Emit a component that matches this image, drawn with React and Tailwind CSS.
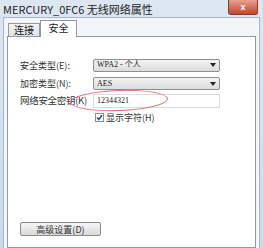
import React from 'react';

const font = { fontFamily: '"Noto Sans CJK SC", "Liberation Sans", sans-serif' };

const Select = ({ value }) => (
  <div className="flex items-center justify-between h-[13px] w-[127px] border border-[#8e8f8f] rounded-[2px] bg-gradient-to-b from-[#f4f4f4] to-[#dcdcdc] px-[3px]">
    <span className="text-[8px] leading-none text-[#222]" style={{ fontFamily: '"Liberation Serif", "Noto Sans CJK SC", serif' }}>{value}</span>
    <svg width="6" height="4" viewBox="0 0 6 4"><path d="M0 0h6L3 4z" fill="#222" /></svg>
  </div>
);

export default function App() {
  return (
    <div className="w-[263px] h-[248px] overflow-hidden flex flex-col bg-gradient-to-b from-[#dde7f2] to-[#c9d9ec]" style={font}>
      <div className="h-[17px] flex items-start justify-between pl-[3px] pr-[5px]">
        <span className="text-[11px] leading-[17px] text-[#1e1e1e] pt-[1px]">MERCURY_0FC6 无线网络属性</span>
        <div className="w-[30px] h-[15px] rounded-b-[3px] bg-gradient-to-b from-[#e6a08e] to-[#c2422b] border border-[#8e3a2a] border-t-0 flex items-center justify-center">
          <span className="text-white text-[9px] font-bold leading-none" style={{ fontFamily: '"Liberation Sans", sans-serif' }}>x</span>
        </div>
      </div>
      <div className="flex-1 mx-[3px] bg-[#f3f5f8] border border-[#a9b6c5] border-b-0 flex flex-col px-[3px] pt-[1px]">
        <div className="flex items-end h-[17px]">
          <div className="h-[13px] w-[32px] border border-[#8e9aa7] border-b-0 bg-gradient-to-b from-[#f4f4f4] to-[#e2e2e2] ml-[1px] flex items-center justify-center">
            <span className="text-[10px] leading-none text-[#222]">连接</span>
          </div>
          <div className="h-[17px] w-[37px] border border-[#8e9aa7] border-b-0 bg-white -mb-[1px] relative z-10 flex items-start justify-center pt-[2px]">
            <span className="text-[10px] leading-none text-[#222]">安全</span>
          </div>
        </div>
        <div className="flex-1 border border-[#8e9aa7] bg-white flex flex-col pl-[12px] pt-[18px] pb-[11px] relative">
          <div className="flex items-center h-[20px]">
            <span className="w-[73px] text-[9px] text-[#333] leading-none whitespace-nowrap">安全类型(E):</span>
            <Select value="WPA2 - 个人" />
          </div>
          <div className="flex items-center h-[17px]">
            <span className="w-[73px] text-[9px] text-[#333] leading-none whitespace-nowrap">加密类型(N):</span>
            <Select value="AES" />
          </div>
          <div className="flex items-center h-[17px] relative">
            <span className="w-[73px] text-[9.5px] text-[#333] leading-none whitespace-nowrap tracking-[-0.3px]">网络安全密钥(K)</span>
            <div className="h-[14px] w-[127px] border border-[#d8dbdf] flex items-center px-[3px]">
              <span className="text-[8px] leading-none text-[#222]" style={{ fontFamily: '"Liberation Serif", serif' }}>12344321</span>
            </div>
            <div className="absolute left-[50px] top-[-2px] w-[98px] h-[21px] rounded-[50%] border border-[#e06a6a] -rotate-[2deg]" />
          </div>
          <div className="flex items-center h-[16px] pl-[75px] gap-[2px]">
            <div className="w-[9px] h-[9px] border border-[#8e8f8f] bg-white flex items-center justify-center">
              <svg width="7" height="7" viewBox="0 0 7 7"><path d="M1 3.5l1.8 2L6 1" stroke="#2b4b8c" strokeWidth="1.5" fill="none" /></svg>
            </div>
            <span className="text-[9px] text-[#333] leading-none">显示字符(H)</span>
          </div>
          <div className="flex-1" />
          <div className="w-[81px] h-[14px] border border-[#8a8a8a] rounded-[2px] bg-gradient-to-b from-[#f6f6f6] to-[#d9d9d9] flex items-center justify-center">
            <span className="text-[9px] text-[#333] leading-none">高级设置(D)</span>
          </div>
        </div>
      </div>
    </div>
  );
}
